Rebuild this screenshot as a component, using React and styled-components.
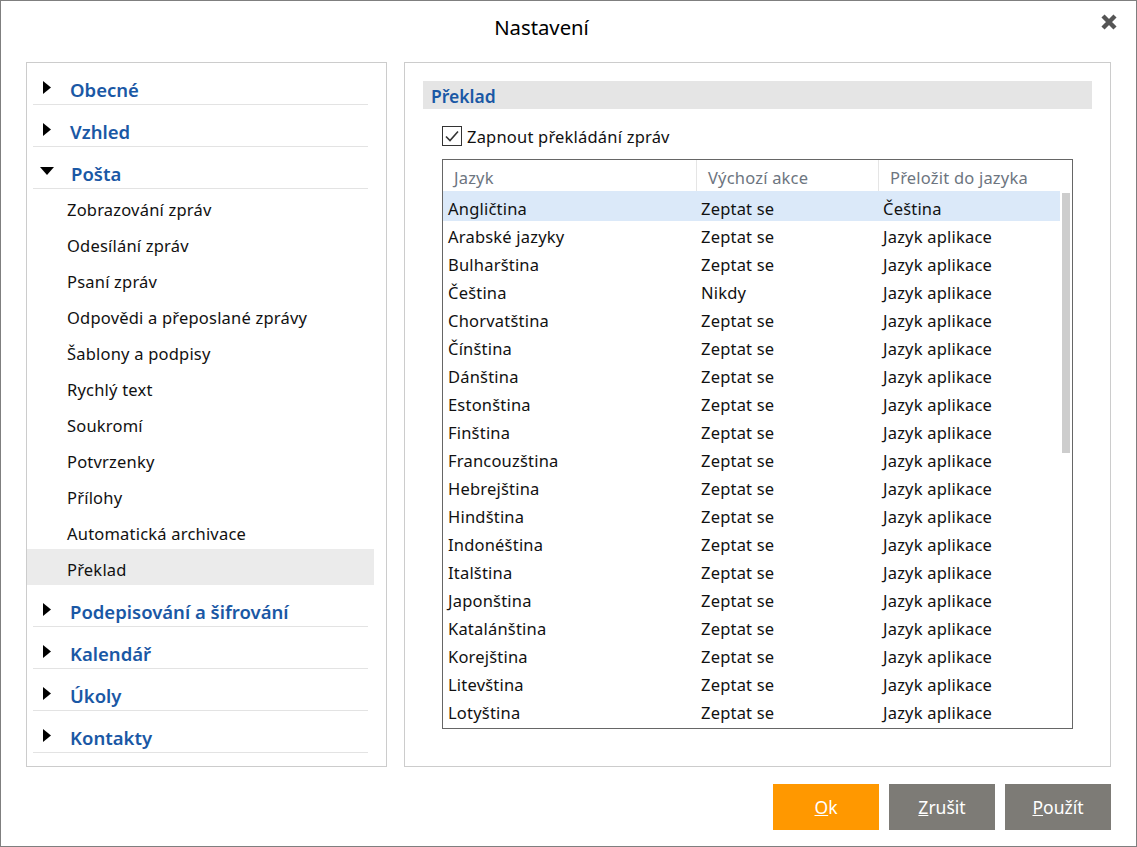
// App.jsx
import styled, { createGlobalStyle } from 'styled-components';

const FONT = '"Noto Sans", "Open Sans", sans-serif';

const GlobalStyle = createGlobalStyle`
  html, body {
    margin: 0;
    padding: 0;
    background: #ffffff;
  }
  * {
    box-sizing: border-box;
  }
`;

const Dialog = styled.div`
  width: 1137px;
  height: 847px;
  border: 1px solid #7f7f7f;
  background: #ffffff;
  display: flex;
  flex-direction: column;
  font-family: ${FONT};
  color: #111111;
  overflow: hidden;
`;

const TitleBar = styled.header`
  height: 61px;
  flex: none;
  position: relative;
  display: flex;
  align-items: center;
  justify-content: center;
  padding: 0 54px 8px 0;
`;

const Title = styled.h1`
  margin: 0;
  font-size: 20.3px;
  font-weight: 400;
  line-height: 27px;
  color: #000000;
`;

const CloseButton = styled.button`
  position: absolute;
  top: 12px;
  right: 18px;
  width: 18px;
  height: 18px;
  padding: 0;
  border: none;
  background: none;
  display: flex;
`;

const Body = styled.main`
  flex: none;
  height: 705px;
  padding: 0 25px;
  display: flex;
  gap: 17px;
`;

const Sidebar = styled.nav`
  width: 361px;
  flex: none;
  border: 1px solid #cccccc;
`;

const GroupHeader = styled.div`
  height: 42px;
  margin: 0 18px 0 6px;
  border-bottom: 1px solid #e3e3e3;
  padding-bottom: 1px;
  display: flex;
  align-items: flex-end;
  position: relative;
`;

const Arrow = styled.svg`
  position: absolute;
  left: ${(p) => (p.$open ? '7px' : '10px')};
  top: ${(p) => (p.$open ? '20px' : '18px')};
`;

const GroupLabel = styled.span`
  margin-left: ${(p) => (p.$open ? '38px' : '37px')};
  font-size: 18.5px;
  font-weight: 600;
  line-height: 27px;
  color: #1a58a5;
`;

const SubItem = styled.div`
  height: 36px;
  padding: 5px 0 0 40px;
  margin-right: 12px;
  display: flex;
  align-items: center;
  font-size: 16.5px;
  letter-spacing: 0.2px;
  background: ${(p) => (p.$active ? '#ebebeb' : 'transparent')};
`;

const Content = styled.section`
  width: 707px;
  flex: none;
  border: 1px solid #cccccc;
  padding: 18px 18px 0;
`;

const SectionHeading = styled.h2`
  margin: 0;
  height: 28px;
  padding-left: 8px;
  background: #e5e5e5;
  font-size: 17.5px;
  font-weight: 600;
  line-height: 31px;
  color: #1a58a5;
`;

const CheckRow = styled.label`
  margin: 17px 0 13px 19px;
  height: 20px;
  display: flex;
  align-items: center;
  gap: 5px;
  font-size: 16.5px;
  letter-spacing: 0.2px;
`;

const CheckBox = styled.span`
  width: 20px;
  height: 20px;
  border: 1px solid #333333;
  display: flex;
  align-items: center;
  justify-content: center;
`;

const Table = styled.div`
  margin-left: 19px;
  width: 631px;
  height: 570px;
  border: 1px solid #666666;
  display: flex;
  flex-direction: column;
  overflow: hidden;
`;

const HeadRow = styled.div`
  height: 31px;
  flex: none;
  display: grid;
  grid-template-columns: 254px 182px 1fr;
`;

const HeadCell = styled.div`
  padding-left: 11px;
  border-right: ${(p) => (p.$last ? 'none' : '1px solid #e5e5e5')};
  font-size: 16.5px;
  letter-spacing: 0.2px;
  line-height: 36px;
  color: #6d7580;
`;

const TableBody = styled.div`
  flex: 1;
  min-height: 0;
  display: flex;
`;

const Rows = styled.div`
  width: 617px;
  flex: none;
`;

const Row = styled.div`
  height: 28px;
  display: grid;
  grid-template-columns: 253px 182px 1fr;
  align-items: center;
  padding-top: 2px;
  background: ${(p) => (p.$selected ? '#dbe9f9' : 'transparent')};
  &:first-child {
    height: 30px;
    padding-top: 4px;
  }
`;

const Cell = styled.div`
  padding-left: 5px;
  font-size: 16.5px;
  letter-spacing: 0.2px;
  white-space: nowrap;
`;

const ScrollTrack = styled.div`
  flex: 1;
  padding: 2px 2px 0 2px;
`;

const ScrollThumb = styled.div`
  width: 8px;
  height: 260px;
  background: #cdcdcd;
`;

const Footer = styled.footer`
  flex: 1;
  padding: 17px 25px 0 0;
  display: flex;
  justify-content: flex-end;
  gap: 10px;
`;

const Button = styled.button`
  width: 106px;
  height: 46px;
  border: none;
  padding: 0;
  background: ${(p) => (p.$primary ? '#ff9800' : '#7d7b76')};
  color: #ffffff;
  font-family: ${FONT};
  font-size: 17.5px;
`;

const groupsBefore = ['Obecné', 'Vzhled'];
const groupsAfter = ['Podepisování a šifrování', 'Kalendář', 'Úkoly', 'Kontakty'];
const mailItems = [
  'Zobrazování zpráv',
  'Odesílání zpráv',
  'Psaní zpráv',
  'Odpovědi a přeposlané zprávy',
  'Šablony a podpisy',
  'Rychlý text',
  'Soukromí',
  'Potvrzenky',
  'Přílohy',
  'Automatická archivace',
  'Překlad',
];

const languages = [
  ['Angličtina', 'Zeptat se', 'Čeština'],
  ['Arabské jazyky', 'Zeptat se', 'Jazyk aplikace'],
  ['Bulharština', 'Zeptat se', 'Jazyk aplikace'],
  ['Čeština', 'Nikdy', 'Jazyk aplikace'],
  ['Chorvatština', 'Zeptat se', 'Jazyk aplikace'],
  ['Čínština', 'Zeptat se', 'Jazyk aplikace'],
  ['Dánština', 'Zeptat se', 'Jazyk aplikace'],
  ['Estonština', 'Zeptat se', 'Jazyk aplikace'],
  ['Finština', 'Zeptat se', 'Jazyk aplikace'],
  ['Francouzština', 'Zeptat se', 'Jazyk aplikace'],
  ['Hebrejština', 'Zeptat se', 'Jazyk aplikace'],
  ['Hindština', 'Zeptat se', 'Jazyk aplikace'],
  ['Indonéština', 'Zeptat se', 'Jazyk aplikace'],
  ['Italština', 'Zeptat se', 'Jazyk aplikace'],
  ['Japonština', 'Zeptat se', 'Jazyk aplikace'],
  ['Katalánština', 'Zeptat se', 'Jazyk aplikace'],
  ['Korejština', 'Zeptat se', 'Jazyk aplikace'],
  ['Litevština', 'Zeptat se', 'Jazyk aplikace'],
  ['Lotyština', 'Zeptat se', 'Jazyk aplikace'],
];

const Group = ({ label, open }) => (
  <GroupHeader>
    {open ? (
      <Arrow $open width="14" height="8" viewBox="0 0 14 8">
        <path d="M0 0H14L7 8Z" fill="#000000" />
      </Arrow>
    ) : (
      <Arrow width="8" height="13" viewBox="0 0 8 13">
        <path d="M0 0L8 6.5L0 13Z" fill="#000000" />
      </Arrow>
    )}
    <GroupLabel $open={open}>{label}</GroupLabel>
  </GroupHeader>
);

const App = () => {
  return (
    <>
      <GlobalStyle />
      <Dialog>
        <TitleBar>
          <Title>Nastavení</Title>
          <CloseButton aria-label="Zavřít">
            <svg width="18" height="18" viewBox="0 0 18 18">
              <path d="M3 3L15 15M15 3L3 15" stroke="#555555" strokeWidth="4.4" />
            </svg>
          </CloseButton>
        </TitleBar>
        <Body>
          <Sidebar>
            {groupsBefore.map((g) => (
              <Group key={g} label={g} />
            ))}
            <Group label="Pošta" open />
            {mailItems.map((item) => (
              <SubItem key={item} $active={item === 'Překlad'}>
                {item}
              </SubItem>
            ))}
            {groupsAfter.map((g) => (
              <Group key={g} label={g} />
            ))}
          </Sidebar>
          <Content>
            <SectionHeading>Překlad</SectionHeading>
            <CheckRow>
              <CheckBox>
                <svg width="16" height="14" viewBox="0 0 16 14">
                  <path d="M2 7.5L6 11.5L14 2.5" fill="none" stroke="#333333" strokeWidth="1.6" />
                </svg>
              </CheckBox>
              Zapnout překládání zpráv
            </CheckRow>
            <Table>
              <HeadRow>
                <HeadCell>Jazyk</HeadCell>
                <HeadCell>Výchozí akce</HeadCell>
                <HeadCell $last>Přeložit do jazyka</HeadCell>
              </HeadRow>
              <TableBody>
                <Rows>
                  {languages.map(([name, action, target], index) => (
                    <Row key={name} $selected={index === 0}>
                      <Cell>{name}</Cell>
                      <Cell>{action}</Cell>
                      <Cell>{target}</Cell>
                    </Row>
                  ))}
                </Rows>
                <ScrollTrack>
                  <ScrollThumb />
                </ScrollTrack>
              </TableBody>
            </Table>
          </Content>
        </Body>
        <Footer>
          <Button $primary>
            <u>O</u>k
          </Button>
          <Button>
            <u>Z</u>rušit
          </Button>
          <Button>
            <u>P</u>oužít
          </Button>
        </Footer>
      </Dialog>
    </>
  );
};

export default App;
